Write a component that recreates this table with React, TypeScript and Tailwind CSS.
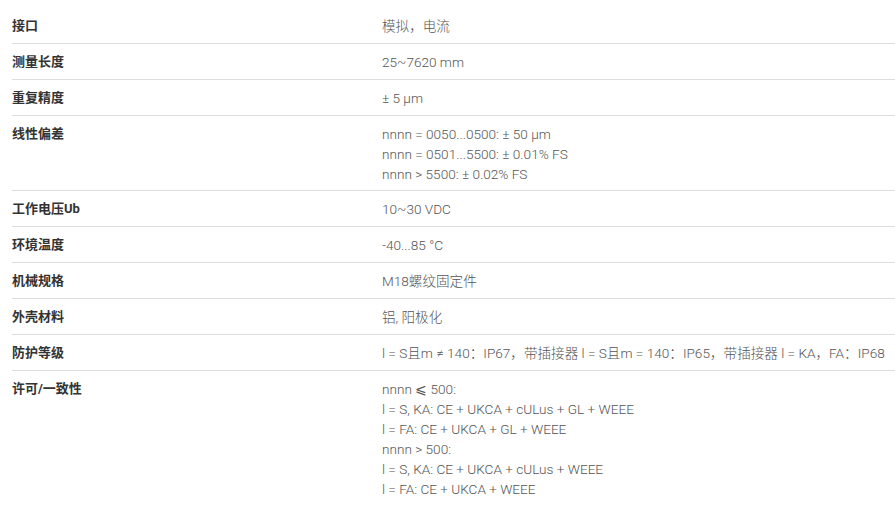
import React from "react";

interface SpecRow {
  label: string;
  values: string[];
}

const rows: SpecRow[] = [
  { label: "接口", values: ["模拟，电流"] },
  { label: "测量长度", values: ["25~7620 mm"] },
  { label: "重复精度", values: ["± 5 µm"] },
  {
    label: "线性偏差",
    values: [
      "nnnn = 0050...0500: ± 50 µm",
      "nnnn = 0501...5500: ± 0.01% FS",
      "nnnn > 5500: ± 0.02% FS",
    ],
  },
  { label: "工作电压Ub", values: ["10~30 VDC"] },
  { label: "环境温度", values: ["-40...85 °C"] },
  { label: "机械规格", values: ["M18螺纹固定件"] },
  { label: "外壳材料", values: ["铝, 阳极化"] },
  {
    label: "防护等级",
    values: [
      "l = S且m ≠ 140：IP67，带插接器 l = S且m = 140：IP65，带插接器 l = KA，FA：IP68",
    ],
  },
  {
    label: "许可/一致性",
    values: [
      "nnnn ⩽ 500:",
      "l = S, KA: CE + UKCA + cULus + GL + WEEE",
      "l = FA: CE + UKCA + GL + WEEE",
      "nnnn > 500:",
      "l = S, KA: CE + UKCA + cULus + WEEE",
      "l = FA: CE + UKCA + WEEE",
    ],
  },
];

const App = () => {
  return (
    <div className="w-[895px] h-[519px] overflow-hidden bg-white">
      <div className="ml-[12px] mt-[8px] flex flex-col">
        {rows.map((row, i) => {
          const last = i === rows.length - 1;
          const multi = row.values.length > 1;
          return (
            <div
              key={row.label}
              className={`flex flex-row pt-[8px] ${
                last ? "pb-[8px]" : multi ? "pb-[6px] border-b border-[#dddddd]" : "pb-[7px] border-b border-[#dddddd]"
              }`}
            >
              <div className="w-[370px] shrink-0 font-['Roboto','Noto_Sans_CJK_SC',sans-serif] font-bold text-[13px] leading-[20px] text-[#333333]">
                {row.label}
              </div>
              <div className="flex flex-col whitespace-nowrap font-['Roboto','Noto_Sans_CJK_SC',sans-serif] font-light text-[13.6px] leading-[20px] text-[#555555]">
                {row.values.map((v) => (
                  <p key={v}>{v}</p>
                ))}
              </div>
            </div>
          );
        })}
      </div>
    </div>
  );
};

export default App;
